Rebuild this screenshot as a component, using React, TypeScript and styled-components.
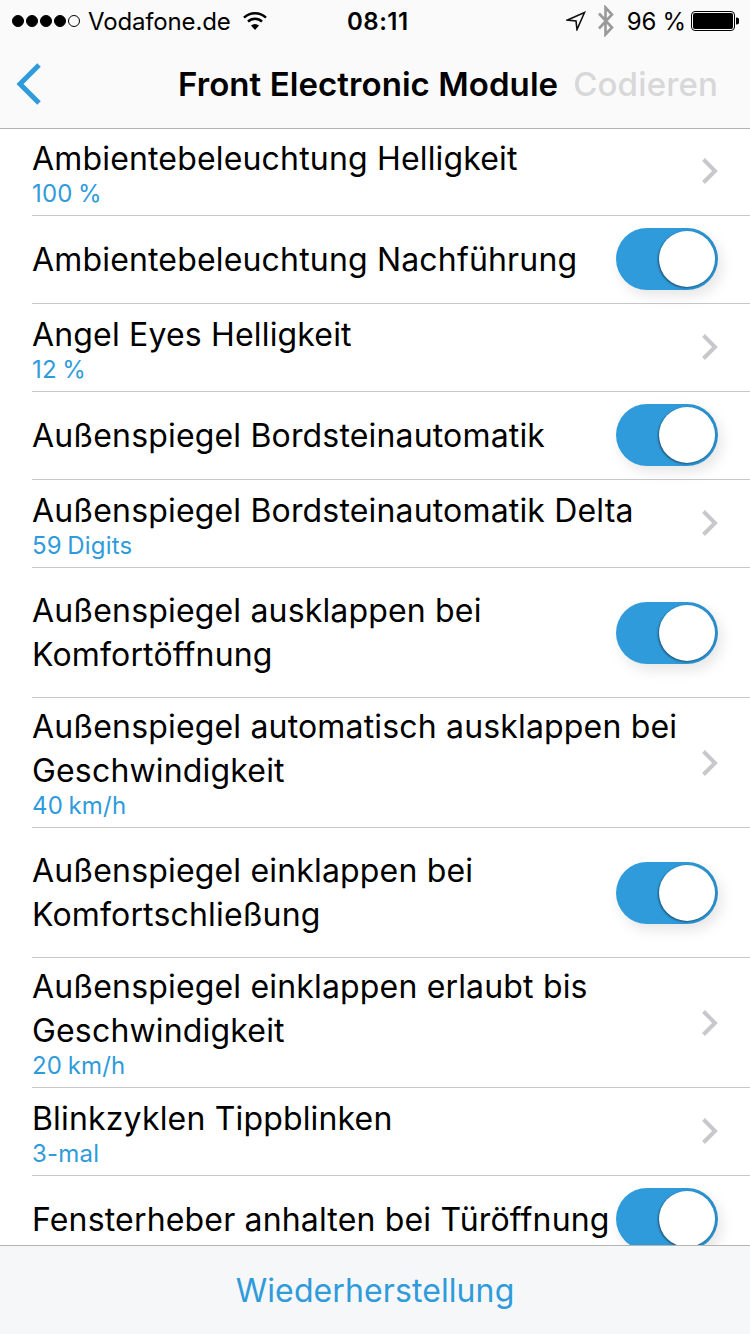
import React from "react";
import styled, { createGlobalStyle } from "styled-components";

const Global = createGlobalStyle`
  html, body { margin: 0; padding: 0; background: #fff; }
  body { font-family: Inter, "Liberation Sans", sans-serif; }
`;

const Page = styled.div`
  width: 750px;
  height: 1334px;
  display: flex;
  flex-direction: column;
  overflow: hidden;
  background: #fff;
  color: #000;
`;

const Header = styled.header`
  flex: none;
  position: relative;
  z-index: 1;
  height: 128px;
  background: #fafafa;
  border-bottom: 1px solid #b4b4b4;
  display: flex;
  flex-direction: column;
`;

const StatusBar = styled.div`
  height: 40px;
  display: flex;
  align-items: center;
  padding: 1px 11px 0 12px;
  font-size: 24px;
`;

const StatusLeft = styled.div`
  display: flex;
  align-items: center;
  width: 260px;
  letter-spacing: -0.15px;
`;

const Dots = styled.div`
  display: flex;
  gap: 2px;
  margin-right: 8px;
`;

const Dot = styled.span<{ $off?: boolean }>`
  width: 12px;
  height: 12px;
  box-sizing: border-box;
  border-radius: 50%;
  background: ${(p) => (p.$off ? "transparent" : "#000")};
  border: 1px solid #000;
`;

const Time = styled.div`
  font-weight: 600;
  letter-spacing: 0.5px;
  margin-left: 75px;
`;

const StatusRight = styled.div`
  display: flex;
  align-items: center;
  justify-content: flex-end;
  margin-left: auto;
`;

const Percent = styled.span`
  margin: 0 5px 0 12px;
  letter-spacing: -0.2px;
`;

const NavBar = styled.div`
  flex: 1;
  display: flex;
  align-items: center;
  padding: 0 32px 2px 14px;
`;

const NavTitle = styled.div`
  flex: 1;
  text-align: right;
  padding-right: 15px;
  font-size: 33px;
  font-weight: 600;
  letter-spacing: 0.07px;
`;

const NavAction = styled.div`
  font-size: 33px;
  font-weight: 500;
  color: #d8d8d8;
  letter-spacing: 0.15px;
`;

const List = styled.main`
  flex: 1;
  min-height: 0;
  overflow: hidden;
`;

const Scroller = styled.div`
  margin-top: -1px;
`;

const Row = styled.div<{ $tall?: boolean; $lifted?: boolean }>`
  height: ${(p) => (p.$tall ? 130 : 88)}px;
  margin-left: 32px;
  padding-right: 30px;
  padding-bottom: ${(p) => (p.$lifted ? 2 : 0)}px;
  box-sizing: border-box;
  display: flex;
  align-items: center;
  border-bottom: 1px solid #c8c7cc;
`;

const RowText = styled.div`
  flex: 1;
  min-width: 0;
  white-space: nowrap;
`;

const Title = styled.div`
  font-size: 32px;
  line-height: 44px;
  letter-spacing: 0.17px;
`;

const Sub = styled.div`
  font-size: 24px;
  line-height: 26px;
  color: #2f9bdb;
  letter-spacing: 0.2px;
  word-spacing: -1.5px;
`;

const Switch = styled.div<{ $tall?: boolean }>`
  flex: none;
  position: relative;
  width: 102px;
  height: 62px;
  margin-right: 2px;
  margin-bottom: ${(p) => (p.$tall ? 0 : 1)}px;
  border-radius: 31px;
  background: linear-gradient(90deg, #2f9bdb 55%, #2a8cc8 100%);
  box-shadow: 4px 6px 14px rgba(0, 0, 0, 0.1);
`;

const Knob = styled.span`
  position: absolute;
  top: 3px;
  right: 3px;
  width: 56px;
  height: 56px;
  border-radius: 50%;
  background: #fff;
  box-shadow: -1px 1px 2px rgba(0, 0, 0, 0.45);
`;

const ChevronIcon = styled.svg<{ $tall?: boolean }>`
  flex: none;
  margin-top: ${(p) => (p.$tall ? 2 : 0)}px;
  margin-bottom: ${(p) => (p.$tall ? 0 : 1)}px;
`;

const Footer = styled.footer`
  flex: none;
  height: 88px;
  position: relative;
  z-index: 1;
  background: #f6f7f8;
  border-top: 1px solid #b4b4b4;
  display: flex;
  align-items: center;
  justify-content: center;
`;

const FooterButton = styled.div`
  font-size: 32px;
  color: #2f9bdb;
  letter-spacing: 0.1px;
  margin-top: 1px;
`;

const Chevron = ({ tall }: { tall?: boolean }) => (
  <ChevronIcon $tall={tall} width="20" height="28" viewBox="0 0 20 28">
    <path d="M3.5 2.5 L15 14 L3.5 25.5" fill="none" stroke="#c7c7cc" strokeWidth="4" />
  </ChevronIcon>
);

const Back = () => (
  <svg width="30" height="44" viewBox="0 0 30 44">
    <path d="M25 3 L6 22 L25 41" fill="none" stroke="#2f9bdb" strokeWidth="5" />
  </svg>
);

const Wifi = () => (
  <svg width="26" height="20" viewBox="0 0 26 20" style={{ marginLeft: 11 }}>
    <path d="M13 19 L9 14.5 A6 6 0 0 1 17 14.5 Z" fill="#000" />
    <path d="M6 10.6 A10 10 0 0 1 20 10.6" fill="none" stroke="#000" strokeWidth="2.4" />
    <path d="M2 6.6 A16 16 0 0 1 24 6.6" fill="none" stroke="#000" strokeWidth="2.4" />
  </svg>
);

const Location = () => (
  <svg width="20" height="20" viewBox="0 0 20 20">
    <path d="M1.5 9 L18.5 1.5 L11 18.5 L10 10 Z" fill="none" stroke="#111" strokeWidth="1.6" />
  </svg>
);

const Bluetooth = () => (
  <svg width="18" height="32" viewBox="0 0 18 32" style={{ marginLeft: 11 }}>
    <path d="M2 8.5 L15 22.5 L8.5 29.5 L8.5 2.5 L15 9.5 L2 23.5" fill="none" stroke="#9a9a9a" strokeWidth="2.6" />
  </svg>
);

const Battery = () => (
  <svg width="48" height="20" viewBox="0 0 48 20">
    <rect x="0.5" y="0.5" width="43" height="19" rx="3.5" fill="none" stroke="#000" />
    <rect x="2" y="2" width="40" height="16" rx="2" fill="#000" />
    <path d="M45 6.5 A3.5 3.5 0 0 1 45 13.5 Z" fill="#000" />
  </svg>
);

type Item = { title: string[]; sub?: string; toggle?: boolean };

const items: Item[] = [
  { title: ["Ambientebeleuchtung Helligkeit"], sub: "100 %" },
  { title: ["Ambientebeleuchtung Nachführung"], toggle: true },
  { title: ["Angel Eyes Helligkeit"], sub: "12 %" },
  { title: ["Außenspiegel Bordsteinautomatik"], toggle: true },
  { title: ["Außenspiegel Bordsteinautomatik Delta"], sub: "59 Digits" },
  { title: ["Außenspiegel ausklappen bei", "Komfortöffnung"], toggle: true },
  { title: ["Außenspiegel automatisch ausklappen bei", "Geschwindigkeit"], sub: "40 km/h" },
  { title: ["Außenspiegel einklappen bei", "Komfortschließung"], toggle: true },
  { title: ["Außenspiegel einklappen erlaubt bis", "Geschwindigkeit"], sub: "20 km/h" },
  { title: ["Blinkzyklen Tippblinken"], sub: "3-mal" },
  { title: ["Fensterheber anhalten bei Türöffnung"], toggle: true },
];

export default function App() {
  return (
    <Page>
      <Global />
      <Header>
        <StatusBar>
          <StatusLeft>
            <Dots>
              <Dot /><Dot /><Dot /><Dot /><Dot $off />
            </Dots>
            <span>Vodafone.de</span>
            <Wifi />
          </StatusLeft>
          <Time>08:11</Time>
          <StatusRight>
            <Location />
            <Bluetooth />
            <Percent>96 %</Percent>
            <Battery />
          </StatusRight>
        </StatusBar>
        <NavBar>
          <Back />
          <NavTitle>Front Electronic Module</NavTitle>
          <NavAction>Codieren</NavAction>
        </NavBar>
      </Header>
      <List>
        <Scroller>
          {items.map((item) => {
            const tall = item.title.length > 1;
            return (
              <Row key={item.title[0]} $tall={tall} $lifted={tall && !!item.sub}>
                <RowText>
                  {item.title.map((line) => (
                    <Title key={line}>{line}</Title>
                  ))}
                  {item.sub && <Sub>{item.sub}</Sub>}
                </RowText>
                {item.toggle ? (
                  <Switch $tall={tall}><Knob /></Switch>
                ) : (
                  <Chevron tall={tall} />
                )}
              </Row>
            );
          })}
        </Scroller>
      </List>
      <Footer>
        <FooterButton>Wiederherstellung</FooterButton>
      </Footer>
    </Page>
  );
}
